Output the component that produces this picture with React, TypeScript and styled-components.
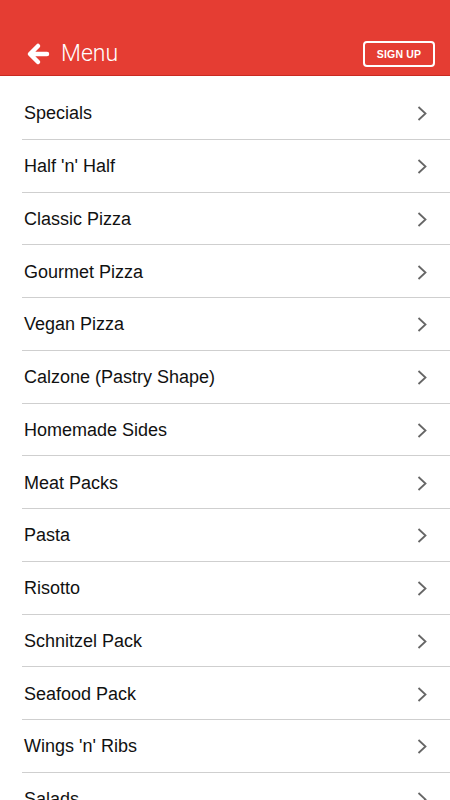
import React from "react";
import styled, { createGlobalStyle } from "styled-components";

const MENU_ITEMS = [
  "Specials",
  "Half 'n' Half",
  "Classic Pizza",
  "Gourmet Pizza",
  "Vegan Pizza",
  "Calzone (Pastry Shape)",
  "Homemade Sides",
  "Meat Packs",
  "Pasta",
  "Risotto",
  "Schnitzel Pack",
  "Seafood Pack",
  "Wings 'n' Ribs",
  "Salads",
  "Desserts",
];

const GlobalStyle = createGlobalStyle`
  html, body {
    margin: 0;
    padding: 0;
    background: #ffffff;
  }
  body {
    font-family: "Liberation Sans", Arial, sans-serif;
    overflow: hidden;
  }
`;

const Screen = styled.div`
  width: 450px;
  height: 800px;
  overflow: hidden;
  background: #ffffff;
`;

const Header = styled.header`
  box-sizing: border-box;
  height: 76px;
  background-color: #e53d33;
  border-bottom: 1px solid #c92a21;
  display: flex;
  align-items: flex-end;
  justify-content: space-between;
  padding: 0 15px 8px 26px;
`;

const TitleGroup = styled.div`
  display: flex;
  align-items: center;
  gap: 11px;
  height: 26px;
`;

const Title = styled.h1`
  margin: 0;
  color: #ffffff;
  font-family: Roboto, "Liberation Sans", sans-serif;
  font-weight: 300;
  font-size: 23px;
  line-height: 26px;
`;

const SignUpButton = styled.button`
  width: 72px;
  height: 26px;
  border: 2px solid #ffffff;
  border-radius: 4px;
  background: transparent;
  color: #ffffff;
  font-family: "Liberation Sans", Arial, sans-serif;
  font-weight: 700;
  font-size: 10.5px;
  letter-spacing: 0.2px;
  padding: 0;
`;

const List = styled.ul`
  list-style: none;
  margin: 0;
  padding: 11px 0 0 22px;
`;

const Row = styled.li`
  height: 52.75px;
  box-sizing: border-box;
  border-bottom: 1px solid #cfcfcf;
  display: flex;
  align-items: center;
  justify-content: space-between;
  padding: 2px 23px 0 2px;
`;

const Label = styled.span`
  color: #111111;
  font-size: 18px;
`;

const BackArrow = () => (
  <svg width="24" height="24" viewBox="0 0 24 24">
    <path
      d="M21 12 H5 M12 4 L4 12 L12 20"
      fill="none"
      stroke="#ffffff"
      strokeWidth="4.5"
      strokeLinecap="round"
      strokeLinejoin="round"
    />
  </svg>
);

const Chevron = () => (
  <svg width="10" height="15" viewBox="0 0 10 15">
    <polyline
      points="1.5,1 8.5,7.5 1.5,14"
      fill="none"
      stroke="#666666"
      strokeWidth="1.8"
    />
  </svg>
);

const App = () => {
  return (
    <Screen>
      <GlobalStyle />
      <Header>
        <TitleGroup>
          <BackArrow />
          <Title>Menu</Title>
        </TitleGroup>
        <SignUpButton>SIGN UP</SignUpButton>
      </Header>
      <List>
        {MENU_ITEMS.map(item => (
          <Row key={item}>
            <Label>{item}</Label>
            <Chevron />
          </Row>
        ))}
      </List>
    </Screen>
  );
};

export default App;
